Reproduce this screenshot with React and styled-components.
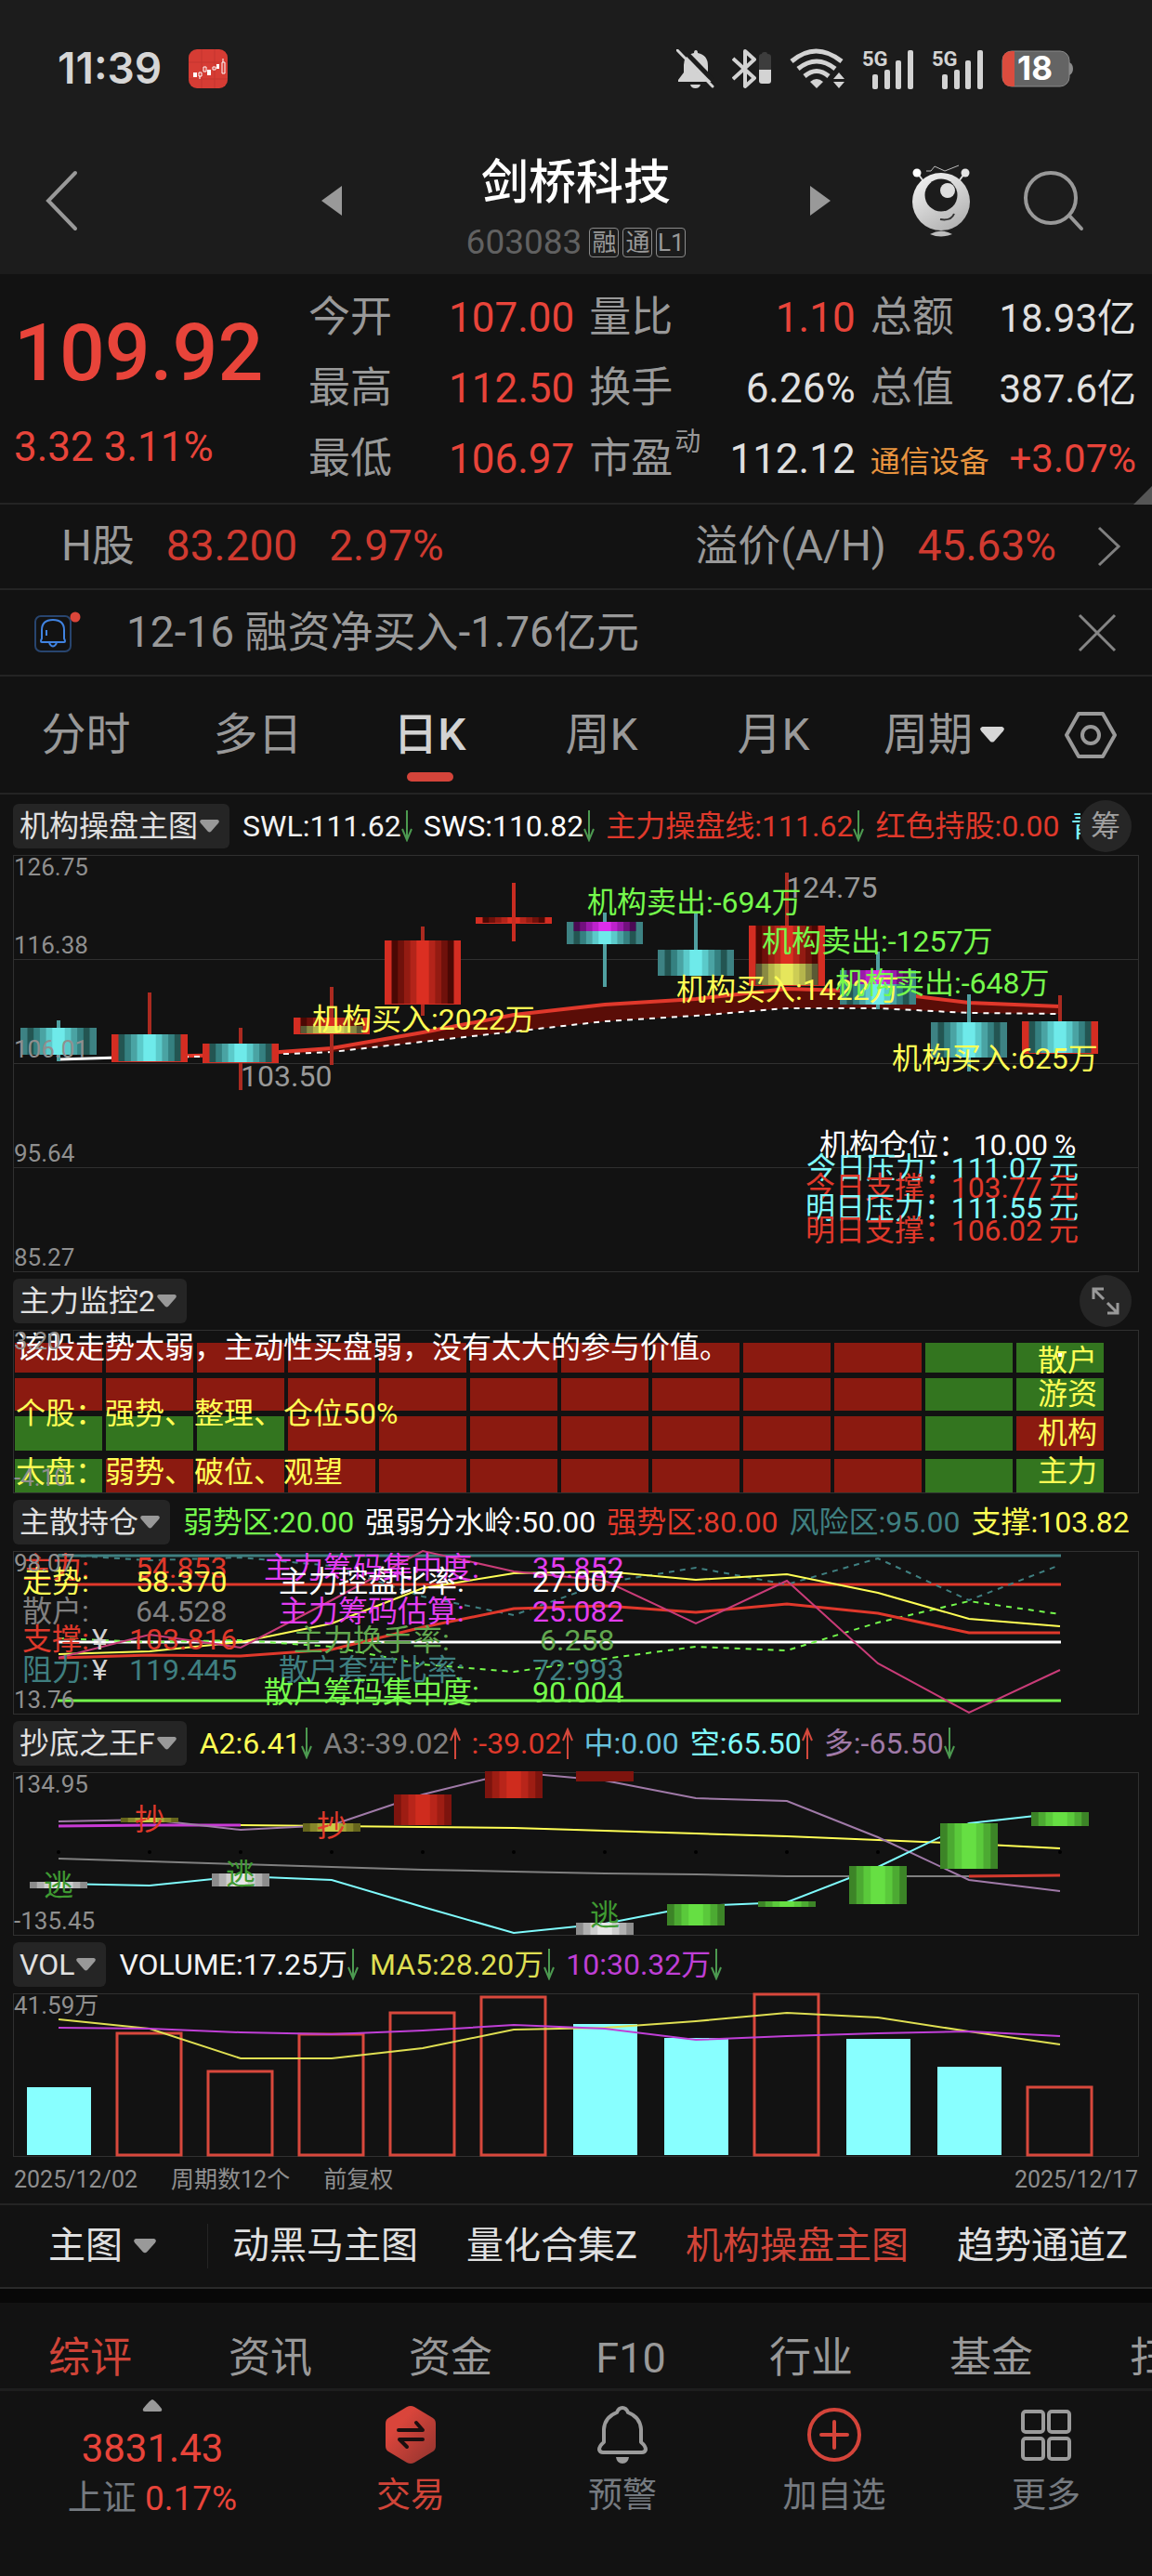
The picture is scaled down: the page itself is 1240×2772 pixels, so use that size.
import { Fragment } from 'react'
import styled, { createGlobalStyle } from 'styled-components'

const RED = '#e8443a'
const DARK_RED = '#d03a30'
const GREY = '#999999'
const CYAN = '#7ffbfd'
const YELLOW = '#ffff55'
const GREEN = '#75fb4c'
const TEAL = '#3f7f80'
const MAGENTA = '#e33df0'

const GlobalStyle = createGlobalStyle`
    * {
        box-sizing: border-box;
    }

    body {
        margin: 0;
        background-color: #121212;
        color: #e0e0e0;
        font-family: Roboto, 'Noto Sans CJK SC', sans-serif;
        line-height: 1.2;
    }

    button {
        padding: 0;
        border: none;
        background: none;
        color: inherit;
        font: inherit;
        cursor: pointer;
    }

    svg {
        display: block;
        flex-shrink: 0;
    }
`

const Page = styled.div`
    min-height: 100vh;
    overflow: hidden;
`

const Header = styled.header`
    height: 295px;
    background-color: #1c1c1c;
`

const StatusBar = styled.div`
    display: flex;
    align-items: center;
    justify-content: space-between;
    height: 148px;
    padding: 0 85px 0 62px;
`

const StatusGroup = styled.div`
    display: flex;
    align-items: center;
    gap: ${props => props.gap}px;
`

const Clock = styled.span`
    font-family: Inter, sans-serif;
    font-size: 46px;
    font-weight: 600;
    color: #d6d6d6;
`

const TitleBar = styled.div`
    display: grid;
    grid-template-columns: 1fr 548px 1fr;
    align-items: center;
    height: 136px;
`

const BackButton = styled.button`
    justify-self: start;
    padding-left: 48px;
`

const TitleMiddle = styled.div`
    display: flex;
    align-items: center;
    justify-content: space-between;
`

const TitleText = styled.div`
    display: flex;
    flex-direction: column;
    align-items: center;
    gap: 12px;
    padding-top: 14px;
`

const StockName = styled.h1`
    margin: 0;
    font-size: 51px;
    font-weight: 500;
    line-height: 64px;
    color: #ffffff;
`

const StockCode = styled.div`
    display: flex;
    align-items: center;
    gap: 4px;
    font-size: 37px;
    line-height: 40px;
    color: #616161;
`

const Code = styled.span`
    margin-right: 4px;
`

const Badge = styled.span`
    width: 32px;
    height: 32px;
    border: 1px solid #8a8a8a;
    border-radius: 4px;
    font-size: 26px;
    line-height: 30px;
    text-align: center;
    color: ${GREY};
`

const TitleActions = styled.div`
    display: flex;
    align-items: center;
    justify-content: flex-end;
    gap: 56px;
    padding-right: 73px;
`

const Quote = styled.section`
    display: grid;
    grid-template-columns: 332px 1fr;
    position: relative;
    height: 248px;
    padding-top: 9px;
    border-bottom: 2px solid #242424;
`

const PriceBox = styled.div`
    display: flex;
    flex-direction: column;
    padding: 24px 0 0 15px;
    color: ${RED};
`

const Price = styled.strong`
    font-size: 86px;
    font-weight: 500;
    line-height: 104px;
`

const Change = styled.span`
    margin-top: 23px;
    font-size: 44px;
    line-height: 52px;
`

const StatGrid = styled.dl`
    display: grid;
    grid-template-columns: repeat(3, 1fr);
    grid-auto-rows: 76px;
    column-gap: 16px;
    margin: 0;
    padding-right: 17px;
`

const Stat = styled.div`
    display: flex;
    align-items: baseline;
    justify-content: space-between;
    line-height: 76px;
`

const StatLabel = styled.dt`
    display: flex;
    font-size: ${props => (props.small ? 32 : 45)}px;
    color: ${props => (props.small ? '#e8943f' : GREY)};
    white-space: nowrap;

    sup {
        margin: 8px 0 0 2px;
        font-size: 28px;
        line-height: 24px;
    }
`

const StatValue = styled.dd`
    margin: 0;
    font-size: ${props => (props.compact ? 42 : 44)}px;
    color: ${props => (props.up ? RED : '#e0e0e0')};
    white-space: nowrap;
`

const Corner = styled.span`
    position: absolute;
    right: 0;
    bottom: -2px;
    border-left: 20px solid transparent;
    border-bottom: 20px solid #555555;
`

const LineRow = styled.div`
    display: flex;
    align-items: center;
    height: ${props => props.height}px;
    padding: 0 ${props => props.right}px 0 ${props => props.left}px;
    border-bottom: 2px solid #242424;
    color: ${GREY};
`

const RowText = styled.span`
    margin-right: ${props => props.gap || 0}px;
    margin-left: ${props => props.before || 0}px;
    font-size: 46px;
    color: ${props => (props.up ? DARK_RED : GREY)};
    white-space: nowrap;
`

const Spacer = styled.span`
    flex: 1;
`

const PeriodTabs = styled.nav`
    display: grid;
    grid-template-columns: repeat(5, 185fr) 315fr;
    height: 127px;
    border-bottom: 2px solid #242424;
`

const PeriodTab = styled.button`
    position: relative;
    font-size: 48px;
    font-weight: ${props => (props.active ? 500 : 400)};
    color: ${props => (props.active ? '#d2d2d2' : GREY)};

    &::after {
        content: '';
        display: ${props => (props.active ? 'block' : 'none')};
        position: absolute;
        left: 50%;
        bottom: 12px;
        width: 50px;
        height: 10px;
        margin-left: -25px;
        border-radius: 5px;
        background-color: #d4443a;
    }
`

const PeriodEnd = styled.div`
    display: flex;
    align-items: center;
    justify-content: space-between;
    padding: 0 38px 0 26px;
`

const PeriodMore = styled.button`
    display: flex;
    align-items: center;
    gap: 8px;
    font-size: 48px;
    color: ${GREY};
`

const Charts = styled.main`
    padding-top: 3px;
`

const PanelHead = styled.div`
    display: flex;
    align-items: center;
    position: relative;
    height: 62px;
    padding: 0 14px;
    font-size: 32px;
    line-height: 48px;
    white-space: nowrap;
`

const Pill = styled.button`
    display: flex;
    align-items: center;
    flex-shrink: 0;
    gap: 2px;
    height: 48px;
    margin-right: 14px;
    padding: 0 11px 0 7px;
    border-radius: 6px;
    background-color: #252525;
    color: #e0e0e0;
`

const Readouts = styled.div`
    display: flex;
    flex: 1;
    gap: 12px;
    min-width: 0;
    margin-right: ${props => (props.clipped ? 63 : 0)}px;
    overflow: hidden;
`

const Readout = styled.span`
    display: flex;
    align-items: center;
    flex-shrink: 0;
    color: ${props => props.color};
`

const RoundButton = styled.button`
    display: flex;
    align-items: center;
    justify-content: center;
    position: absolute;
    top: 3px;
    right: 22px;
    width: 56px;
    height: 56px;
    border-radius: 50%;
    background-color: #262626;
    color: #a0a0a0;
`

const Chart = styled.svg`
    width: 100%;
    height: auto;
    overflow: visible;
    font-size: 32px;
`

const AxisText = styled.text`
    font-size: 26px;
    fill: #8f8f8f;
`

const DateRow = styled.div`
    display: flex;
    align-items: center;
    gap: 36px;
    height: 52px;
    padding: 0 15px;
    border-bottom: 2px solid #242424;
    font-size: 25px;
    color: #8f8f8f;
`

const IndicatorBar = styled.div`
    display: flex;
    align-items: center;
    gap: 52px;
    height: 90px;
    padding-left: 52px;
    border-bottom: 2px solid #2a2a2a;
    font-size: 40px;
    white-space: nowrap;
    overflow: hidden;
`

const MainPicker = styled.button`
    display: flex;
    align-items: center;
    flex-shrink: 0;
    gap: 12px;
    width: 172px;
    height: 48px;
    margin-right: -26px;
    border-right: 1px solid #242424;
    color: #e0e0e0;
`

const Indicator = styled.button`
    flex-shrink: 0;
    color: ${props => (props.active ? '#d04438' : '#e0e0e0')};
`

const Band = styled.div`
    height: 15px;
    background-color: #080808;
`

const InfoTabs = styled.nav`
    display: flex;
    height: 95px;
    padding-top: 28px;
    border-bottom: 3px solid #1e1e1e;
    overflow: hidden;
`

const InfoTab = styled.button`
    flex: 0 0 194px;
    font-size: 45px;
    line-height: 64px;
    color: ${props => (props.active ? '#d04438' : GREY)};
`

const BottomBar = styled.footer`
    display: grid;
    grid-template-columns: 328fr repeat(4, 228fr);
    height: 199px;
`

const IndexBox = styled.button`
    display: flex;
    flex-direction: column;
    align-items: center;
    align-self: start;
    padding-top: 9px;
    color: ${RED};
`

const IndexValue = styled.span`
    margin-top: 14px;
    font-size: 42px;
    line-height: 52px;
`

const IndexChange = styled.span`
    font-size: 37px;
    line-height: 56px;

    span {
        color: #757a80;
    }
`

const NavButton = styled.button`
    display: flex;
    flex-direction: column;
    align-items: center;
    align-self: start;
    gap: 8px;
    padding-top: 16px;
    font-size: 37px;
    line-height: 54px;
    color: ${props => (props.active ? '#d04438' : '#757a80')};
`

const stats = [
    { label: '今开', value: '107.00', up: true },
    { label: '量比', value: '1.10', up: true },
    { label: '总额', value: '18.93亿', compact: true },
    { label: '最高', value: '112.50', up: true },
    { label: '换手', value: '6.26%' },
    { label: '总值', value: '387.6亿', compact: true },
    { label: '最低', value: '106.97', up: true },
    { label: '市盈', sup: '动', value: '112.12' },
    { label: '通信设备', small: true, value: '+3.07%', up: true, compact: true },
]

const readouts = {
    main: [
        { text: 'SWL:111.62', color: '#f2f2f2', dir: 'down' },
        { text: 'SWS:110.82', color: '#ffffff', dir: 'down' },
        { text: '主力操盘线:111.62', color: '#e0392b', dir: 'down' },
        { text: '红色持股:0.00', color: '#e0392b' },
        { text: '青', color: CYAN },
    ],
    holding: [
        { text: '弱势区:20.00', color: GREEN },
        { text: '强弱分水岭:50.00', color: '#ffffff' },
        { text: '强势区:80.00', color: '#e0392b' },
        { text: '风险区:95.00', color: TEAL },
        { text: '支撑:103.82', color: YELLOW },
    ],
    bottom: [
        { text: 'A2:6.41', color: YELLOW, dir: 'down' },
        { text: 'A3:-39.02', color: '#808080', dir: 'up' },
        { text: ':-39.02', color: '#e0392b', dir: 'up' },
        { text: '中:0.00', color: '#67c0dc' },
        { text: '空:65.50', color: CYAN, dir: 'up' },
        { text: '多:-65.50', color: '#a07aa8', dir: 'down' },
    ],
    volume: [
        { text: 'VOLUME:17.25万', color: '#f2f2f2', dir: 'down' },
        { text: 'MA5:28.20万', color: '#dfdf52', dir: 'down' },
        { text: '10:30.32万', color: '#bf3fd6', dir: 'down' },
    ],
}

const palettes = {
    red: ['#4a0804', '#6f110b', '#931b12', '#b3241a', '#dc2f22'],
    cyan: ['#235552', '#358080', '#4aa3a3', '#5bcaca', '#6eeaea'],
    olive: ['#5a5a35', '#8a8a42', '#b5b54c', '#cdcd55', '#e6e65c'],
    purple: ['#4b0a54', '#72107e', '#9a1aaa', '#bd22cc', '#dc2eea'],
    barRed: ['#7d140e', '#9e1d13', '#b8251a', '#cf2c1e'],
    barGreen: ['#3c8427', '#4caa32', '#5ac93b', '#66df43'],
    barWhite: ['#8c8c8c', '#b0b0b0', '#cecece', '#e6e6e6'],
    barOlive: ['#65651c', '#86862a', '#a5a535', '#caca45'],
    barDark: ['#7d140e'],
}

const candles = [
    { top: 186, bottom: 215, high: 178, low: 222, body: 'cyan', edge: '#3d8283' },
    { top: 193, bottom: 223, high: 148, low: 223, body: 'cyan', edge: '#d42d22' },
    { top: 203, bottom: 224, high: 186, low: 253, body: 'cyan', edge: '#d42d22' },
    { top: 175, bottom: 193, high: 142, low: 226, body: 'red', edge: '#d42d22', part: ['olive', 184, 192] },
    { top: 92, bottom: 161, high: 77, low: 173, body: 'red', edge: '#d42d22' },
    { top: 67, bottom: 74, high: 30, low: 93, body: 'red', edge: '#d42d22' },
    { top: 72, bottom: 96, high: 62, low: 142, body: 'cyan', edge: '#3d8283', part: ['purple', 72, 82] },
    { top: 102, bottom: 130, high: 62, low: 130, body: 'cyan', edge: '#3d8283' },
    { top: 76, bottom: 141, high: 19, low: 141, body: 'red', edge: '#d42d22', part: ['olive', 117, 140] },
    { top: 124, bottom: 161, high: 104, low: 166, body: 'cyan', edge: '#3d8283', part: ['purple', 124, 139] },
    { top: 180, bottom: 218, high: 150, low: 233, body: 'cyan', edge: '#3d8283' },
    { top: 179, bottom: 214, high: 151, low: 214, body: 'cyan', edge: '#d42d22' },
]

const trades = [
    { x: 336, y: 188, text: '机构买入:2022万', color: YELLOW },
    { x: 632, y: 62, text: '机构卖出:-694万', color: GREEN },
    { x: 820, y: 104, text: '机构卖出:-1257万', color: GREEN },
    { x: 728, y: 156, text: '机构买入:1422万', color: YELLOW },
    { x: 899, y: 149, text: '机构卖出:-648万', color: GREEN },
    { x: 960, y: 230, text: '机构买入:625万', color: YELLOW },
]

const levels = [
    { x: 882, y: 323, label: '机构仓位：', value: '10.00', unit: '%', color: '#ffffff' },
    { x: 868, y: 348, label: '今日压力：', value: '111.07', unit: '元', color: CYAN },
    { x: 867, y: 369, label: '今日支撑：', value: '103.77', unit: '元', color: '#e0392b' },
    { x: 867, y: 391, label: '明日压力：', value: '111.55', unit: '元', color: CYAN },
    { x: 867, y: 415, label: '明日支撑：', value: '106.02', unit: '元', color: '#e0392b' },
]

const swl = [220, 217, 215, 208, 191, 172, 161, 155, 144, 147, 159, 163]
const sws = [220, 218, 216, 212, 201, 190, 179, 173, 165, 165, 170, 171]

const heatRows = [
    { y: 14, height: 32, green: [10, 11], label: '散户', labelY: 44 },
    { y: 52, height: 35, green: [10, 11], label: '游资', labelY: 80 },
    { y: 93, height: 37, green: [0, 1, 2, 10], label: '机构', labelY: 122 },
    { y: 139, height: 36, green: [0, 10, 11], label: '主力', labelY: 163 },
]

const holdingTexts = [
    { x: 24, valueX: 146, y: 29, label: '主力:', value: '54.853', color: '#e0392b' },
    { x: 24, valueX: 146, y: 76, label: '散户:', value: '64.528', color: '#808080' },
    { x: 24, valueX: 139, y: 106, label: '支撑:', value: '103.816', color: '#e0392b', yen: true },
    { x: 24, valueX: 139, y: 139, label: '阻力:', value: '119.445', color: TEAL, yen: true },
    { x: 284, valueX: 573, y: 29, label: '主力筹码集中度:', value: '35.852', color: MAGENTA },
    { x: 24, valueX: 146, y: 44, label: '走势:', value: '58.370', color: YELLOW },
    { x: 300, valueX: 573, y: 44, label: '主力控盘比率:', value: '27.007', color: '#ffffff' },
    { x: 300, valueX: 573, y: 76, label: '主力筹码估算:', value: '25.082', color: MAGENTA },
    { x: 316, valueX: 581, y: 107, label: '主力换手率:', value: '6.258', color: '#62a84f' },
    { x: 300, valueX: 573, y: 139, label: '散户套牢比率:', value: '72.993', color: TEAL },
    { x: 284, valueX: 573, y: 163, label: '散户筹码集中度:', value: '90.004', color: GREEN },
]

const strengthBars = [
    [0, 118, 125, 'barWhite'],
    [1, 49, 54, 'barOlive'],
    [2, 109, 123, 'barWhite'],
    [3, 55, 64, 'barOlive'],
    [4, 24, 57, 'barRed'],
    [5, -1, 28, 'barRed'],
    [6, -1, 10, 'barDark'],
    [6, 162, 175, 'barWhite'],
    [7, 142, 165, 'barGreen'],
    [8, 139, 145, 'barGreen'],
    [9, 101, 142, 'barGreen'],
    [10, 55, 104, 'barGreen'],
    [11, 43, 58, 'barGreen'],
]

const marks = [
    [1, 62, '抄'],
    [3, 69, '抄'],
    [0, 133, '逃'],
    [2, 121, '逃'],
    [6, 165, '逃'],
]

const volumes = [
    [101, false], [42, true], [83, true], [43, true], [20, true], [3, true],
    [33, false], [48, false], [0, true], [49, false], [79, false], [100, true],
]

const cx = i => 63 + i * 98
const toPoints = (ys, start = 0) => ys.map((y, i) => `${cx(i + start)},${y}`).join(' ')

const Line = ({ ys, start, color, width = 2, dash }) => (
    <polyline points={toPoints(ys, start)} fill="none" stroke={color} strokeWidth={width} strokeDasharray={dash} />
)

const Frame = ({ height }) => (
    <rect x="14.5" y="0.5" width="1211" height={height - 1} fill="none" stroke="#303030" />
)

// Body painted as nested bands, darkest outside and brightest in the middle
const Bands = ({ x, width, top, bottom, palette }) => {
    const colors = palettes[palette]
    return colors.map((color, k) => {
        const inset = (width / 2 / colors.length) * k
        return <rect key={k} x={x - width / 2 + inset} y={top} width={width - inset * 2} height={bottom - top} fill={color} />
    })
}

const Candle = ({ index, top, bottom, high, low, body, edge, part }) => {
    const x = cx(index)
    const isRed = edge === '#d42d22'
    return (
        <g>
            <rect x={x - 2} y={high} width="4" height={low - high} fill={isRed ? '#ab2a20' : '#4f9fa0'} />
            <rect x={x - 41} y={top} width="82" height={bottom - top} fill={edge} />
            <Bands x={x} width={67} top={top} bottom={isRed ? bottom - 1 : bottom} palette={body} />
            {part && <Bands x={x} width={67} top={part[1]} bottom={part[2]} palette={part[0]} />}
            {index === 5 && <rect x={x - 2} y={high} width="4" height={low - high} fill="#c92c21" />}
        </g>
    )
}

const Caret = ({ width = 22, color = '#999999' }) => (
    <svg width={width} height={width * 0.64} viewBox="0 0 22 14">
        <path d="M2 0h18q3 1 1 4l-8 9q-2 2-4 0L1 4Q-1 1 2 0z" fill={color} />
    </svg>
)

const Trend = ({ dir }) => (
    <svg width="12" height="34" viewBox="0 0 12 34" fill="none" strokeWidth="2">
        {dir === 'down'
            ? <path d="M6 0v32M1 20l5 12 5-12" stroke="#4c9a50" />
            : <path d="M6 34V2M1 14L6 2l5 12" stroke="#d4483c" />}
    </svg>
)

const Signal = () => (
    <svg width="56" height="43" viewBox="0 0 56 43" fill="#d3d3d3">
        <text x="0" y="18" fontSize="22" fontWeight="700" fontFamily="Roboto, sans-serif">5G</text>
        <rect x="11" y="27" width="6" height="16" rx="2" />
        <rect x="24" y="22" width="6" height="21" rx="2" />
        <rect x="36" y="12" width="6" height="31" rx="2" />
        <rect x="49" y="1" width="6" height="42" rx="2" />
    </svg>
)

const StatusIcons = () => (
    <StatusGroup gap={19}>
        <svg width="41" height="42" viewBox="0 0 41 42">
            <path d="M21 1q2 0 2 3 11 2 11 14v8l4 7v2H2v-2l6-8v-8Q8 6 19 4q0-3 2-3z" fill="#d3d3d3" />
            <path d="M15 38h11q-1 4-5.500 4T15 38z" fill="#d3d3d3" />
            <path d="M4 -3L44 38" stroke="#1c1c1c" strokeWidth="5" />
            <path d="M1 1l38 39" stroke="#d3d3d3" strokeWidth="3" strokeLinecap="round" />
        </svg>
        <svg width="43" height="44" viewBox="0 0 43 44">
            <path d="M1 11l23 21-10 9V3l10 9L1 33" fill="none" stroke="#d3d3d3" strokeWidth="4" strokeLinejoin="round" />
            <path d="M29 24V9q0-3 3-3 0-2 3-2h1q2 0 2 2 4 0 4 3v15z" fill="#3d3d3d" />
            <path d="M29 23h13v12q0 3-3 3h-7q-3 0-3-3z" fill="#d3d3d3" />
        </svg>
        <svg width="59" height="44" viewBox="0 0 59 44">
            <g fill="none" stroke="#d3d3d3" strokeWidth="5">
                <path d="M2 14Q28-8 56 14" />
                <path d="M9 22q20-16 40 0" />
                <path d="M16 30q13-11 26 0" />
            </g>
            <path d="M22 36q7-6 14 0l-7 7z" fill="#d3d3d3" />
            <path d="M53 26l6 7H47zM47 36h12l-6 7z" fill="#d3d3d3" />
        </svg>
        <Signal />
        <Signal />
        <svg width="77" height="40" viewBox="0 0 77 40">
            <rect x="1" y="1" width="72" height="38" rx="10" fill="#646464" stroke="#8a8a8a" />
            <path d="M73 13q4 2 4 7t-4 7z" fill="#8a8a8a" />
            <path d="M14 1H11Q1 1 1 11v18q0 10 10 10h3z" fill="#db4c3e" />
            <text x="36" y="32" textAnchor="middle" fontSize="35" fontWeight="700" fontFamily="Inter, sans-serif" fill="#ffffff">18</text>
        </svg>
    </StatusGroup>
)

const AppIcon = () => (
    <svg width="42" height="42" viewBox="0 0 42 42">
        <rect width="42" height="42" rx="9" fill="#d63c34" />
        <path d="M0 14h42M0 32h42M14 0v42M28 0v42" stroke="#c4352e" />
        <path d="M5 25h4v5H5zM20 22h4v6h-4zM30 16h3v5h-3z" fill="#ffffff" />
        <path d="M11 25h3v4h-3zM16 19h3v5h-3zM26 19h3v3h-3zM36 14h3v12h-3zM12 29v3M37 10v4" fill="none" stroke="#ffffff" />
    </svg>
)

const Robot = () => (
    <svg width="63" height="78" viewBox="0 0 63 78">
        <defs>
            <linearGradient id="robot" x1="0" y1="0" x2="0.6" y2="1">
                <stop offset="0" stopColor="#f8f8f8" />
                <stop offset="1" stopColor="#b4b4b4" />
            </linearGradient>
        </defs>
        <path d="M6 10l6 8M56 10l-6 8" stroke="#dcdcdc" strokeWidth="2" />
        <circle cx="5" cy="9" r="4.500" fill="#ffffff" />
        <circle cx="57" cy="9" r="4.500" fill="#e4e4e4" />
        <path d="M15 7h5l4-5 11 5 15-6" fill="none" stroke="#bdbdbd" />
        <circle cx="31" cy="40" r="31" fill="url(#robot)" />
        <circle cx="31" cy="33" r="17.500" fill="#1c1c1c" />
        <circle cx="38" cy="28" r="8" fill="#dedede" />
        <path d="M30 59q12 2 15-6" fill="none" stroke="#333333" strokeWidth="2" />
        <path d="M19 75q12-7 24 0-12 5-24 0z" fill="#bdbdbd" />
    </svg>
)

const Indicators = ({ name, items = [], children }) => (
    <PanelHead>
        <Pill type="button" aria-haspopup="listbox">
            {name}
            <Caret width={21} />
        </Pill>
        <Readouts clipped={children ? 1 : 0}>
            {items.map(item => (
                <Readout key={item.text} color={item.color}>
                    {item.text}
                    {item.dir && <Trend dir={item.dir} />}
                </Readout>
            ))}
        </Readouts>
        {children}
    </PanelHead>
)

const MainChart = () => (
    <Chart viewBox="0 0 1240 449">
        <Frame height={449} />
        <path d="M14 112.500h1211M14 224.500h1211M14 336.500h1211" stroke="#303030" />
        <polygon points={`${toPoints(swl)} ${sws.map((y, i) => `${cx(i)},${y}`).reverse().join(' ')}`} fill="#5a0d07" />
        <Line ys={swl.slice(0, 2)} color="#ffffff" width={3} />
        <Line ys={swl.slice(1)} start={1} color="#e0382b" width={4} />
        <Line ys={sws.slice(1)} start={1} color="#ffffff" dash="6 6" />
        {candles.map((candle, i) => <Candle key={i} index={i} {...candle} />)}
        <AxisText x="15" y="22">126.75</AxisText>
        <AxisText x="15" y="106">116.38</AxisText>
        <AxisText x="15" y="218">106.01</AxisText>
        <AxisText x="15" y="330">95.64</AxisText>
        <AxisText x="15" y="442">85.27</AxisText>
        <text x="846" y="46" fill={GREY}>124.75</text>
        <text x="259" y="249" fill={GREY}>103.50</text>
        {trades.map(trade => (
            <text key={trade.text} x={trade.x} y={trade.y} fill={trade.color}>{trade.text}</text>
        ))}
        {levels.map(level => (
            <g key={level.label} fill={level.color}>
                <text x={level.x} y={level.y}>{level.label}</text>
                <text x={level.unit === '%' ? 1128 : 1122} y={level.y} textAnchor="end">{level.value}</text>
                <text x={level.unit === '%' ? 1135 : 1129} y={level.y}>{level.unit}</text>
            </g>
        ))}
    </Chart>
)

const HeatChart = () => (
    <Chart viewBox="0 0 1240 176">
        {heatRows.map(row => (
            <Fragment key={row.label}>
                {candles.map((_, i) => (
                    <rect key={i} x={16 + i * 98} y={row.y} width="94" height={row.height} fill={row.green.includes(i) ? '#33751f' : '#8b1a10'} />
                ))}
                <text x="1117" y={row.labelY} fill={YELLOW}>{row.label}</text>
            </Fragment>
        ))}
        <Frame height={176} />
        <rect x="1139" y="25" width="4" height="4" fill="#ffffff" />
        <text x="17" y="30" fill="#ffffff">该股走势太弱，主动性买盘弱，没有太大的参与价值。</text>
        <text x="17" y="101" fill={YELLOW}>个股：强势、整理、仓位50%</text>
        <text x="17" y="164" fill={YELLOW}>大盘：弱势、破位、观望</text>
        <AxisText x="15" y="21">3.20</AxisText>
        <AxisText x="15" y="168">-4.10</AxisText>
    </Chart>
)

const HoldingChart = () => (
    <Chart viewBox="0 0 1240 176">
        <Frame height={176} />
        <path d="M62 5h1080" stroke={TEAL} strokeWidth="3" />
        <path d="M62 36h1080" stroke="#e0382b" strokeWidth="3" />
        <path d="M62 98h1080" stroke="#ffffff" strokeWidth="3" />
        <path d="M62 161h1080" stroke={GREEN} strokeWidth="3" />
        <Line ys={[4, 10, 7, 16, 49, 69, 34, 18, 36, 8, 53, 15]} color={TEAL} dash="6 6" />
        <Line ys={[94, 98, 96, 103, 122, 130, 116, 103, 107, 77, 54, 68]} color={GREEN} dash="6 6" />
        <Line ys={[115, 112, 113, 106, 82, 62, 59, 66, 57, 67, 88, 88]} color="#e0382b" width={3} />
        <Line ys={[111, 108, 98, 78, 40, 24, 22, 31, 25, 45, 73, 81]} color={YELLOW} />
        <Line ys={[115, 90, 104, 53, 0, 22, 32, 78, 32, 121, 174, 128]} color="#c93c78" />
        {holdingTexts.map(item => (
            <g key={item.label} fill={item.color}>
                <text x={item.x} y={item.y}>{item.label}</text>
                {item.yen && <text x="99" y={item.y} fill="#d0d0d0">¥</text>}
                <text x={item.valueX} y={item.y}>{item.value}</text>
            </g>
        ))}
        <AxisText x="15" y="22">98.07</AxisText>
        <AxisText x="15" y="169">13.76</AxisText>
    </Chart>
)

const BottomChart = () => (
    <Chart viewBox="0 0 1240 176">
        <Frame height={176} />
        <Line ys={[93, 96, 99, 102, 105, 107, 109, 110, 112, 112, 112]} color="#808080" />
        <Line ys={[112, 111]} start={10} color="#d43a2e" width={3} />
        <Line ys={[58, 57, 57]} color="#c93ad6" width={3} />
        <Line ys={[57, 58, 59, 60, 63, 66, 69, 73, 77, 82]} start={2} color={YELLOW} />
        <Line ys={[53, 51, 62, 57, 24, 0, 9, 28, 31, 70, 116, 128]} color="#a07aa8" />
        <Line ys={[120, 122, 112, 116, 145, 173, 163, 144, 140, 102, 55, 44]} color={CYAN} />
        {candles.map((_, i) => <circle key={i} cx={cx(i)} cy="86" r="2" fill="#000000" />)}
        {strengthBars.map(([i, top, bottom, palette]) => (
            <Bands key={`${i}-${top}`} x={cx(i)} width={62} top={top} bottom={bottom} palette={palette} />
        ))}
        {marks.map(([i, y, text]) => (
            <text key={i} x={cx(i)} y={y} textAnchor="middle" fill={text === '抄' ? '#e0392b' : '#3f9a32'}>{text}</text>
        ))}
        <AxisText x="15" y="22">134.95</AxisText>
        <AxisText x="15" y="169">-135.45</AxisText>
    </Chart>
)

const VolumeChart = () => (
    <Chart viewBox="0 0 1240 176">
        <Frame height={176} />
        {volumes.map(([top, up], i) => (up
            ? <rect key={i} x={cx(i) - 35} y={top + 1} width="69" height={173 - top} fill="none" stroke="#d8483c" strokeWidth="3" />
            : <rect key={i} x={cx(i) - 34} y={top} width="69" height={174 - top} fill="#88ffff" />
        ))}
        <Line ys={[28, 38, 70, 70, 59, 39, 37, 30, 21, 26, 41, 55]} color="#dfdf52" />
        <Line ys={[37, 38, 42, 44, 40, 34, 38, 50, 46, 43, 41, 46]} color="#bf3fd6" />
        <AxisText x="15" y="22">41.59万</AxisText>
    </Chart>
)

const App = () => {
    return (
        <Page>
            <GlobalStyle />
            <Header>
                <StatusBar>
                    <StatusGroup gap={29}>
                        <Clock>11:39</Clock>
                        <AppIcon />
                    </StatusGroup>
                    <StatusIcons />
                </StatusBar>
                <TitleBar>
                    <BackButton type="button" aria-label="返回">
                        <svg width="36" height="66" viewBox="0 0 36 66" fill="none" stroke="#999999" strokeWidth="4" strokeLinecap="round">
                            <path d="M33 3L4 33l29 30" />
                        </svg>
                    </BackButton>
                    <TitleMiddle>
                        <button type="button" aria-label="上一个">
                            <svg width="22" height="32" viewBox="0 0 22 32"><path d="M22 0v32L0 16z" fill="#999999" /></svg>
                        </button>
                        <TitleText>
                            <StockName>剑桥科技</StockName>
                            <StockCode>
                                <Code>603083</Code>
                                <Badge>融</Badge>
                                <Badge>通</Badge>
                                <Badge>L1</Badge>
                            </StockCode>
                        </TitleText>
                        <button type="button" aria-label="下一个">
                            <svg width="22" height="32" viewBox="0 0 22 32"><path d="M0 0v32l22-16z" fill="#999999" /></svg>
                        </button>
                    </TitleMiddle>
                    <TitleActions>
                        <button type="button" aria-label="助手"><Robot /></button>
                        <button type="button" aria-label="搜索">
                            <svg width="66" height="66" viewBox="0 0 66 66" fill="none" stroke="#999999" strokeWidth="4" strokeLinecap="round">
                                <circle cx="30" cy="30" r="27" />
                                <path d="M50 49l13 14" />
                            </svg>
                        </button>
                    </TitleActions>
                </TitleBar>
            </Header>

            <Quote>
                <PriceBox>
                    <Price>109.92</Price>
                    <Change>3.32 3.11%</Change>
                </PriceBox>
                <StatGrid>
                    {stats.map(stat => (
                        <Stat key={stat.label}>
                            <StatLabel small={stat.small ? 1 : 0}>
                                {stat.label}
                                {stat.sup && <sup>{stat.sup}</sup>}
                            </StatLabel>
                            <StatValue up={stat.up ? 1 : 0} compact={stat.compact ? 1 : 0}>{stat.value}</StatValue>
                        </Stat>
                    ))}
                </StatGrid>
                <Corner />
            </Quote>

            <LineRow height={92} left={66} right={33}>
                <RowText gap={34}>H股</RowText>
                <RowText gap={34} up={1}>83.200</RowText>
                <RowText up={1}>2.97%</RowText>
                <Spacer />
                <RowText gap={34}>溢价(A/H)</RowText>
                <RowText gap={44} up={1}>45.63%</RowText>
                <svg width="26" height="44" viewBox="0 0 26 44" fill="none" stroke="#808080" strokeWidth="3">
                    <path d="M2 2l21 20L2 42" />
                </svg>
            </LineRow>

            <LineRow height={93} left={36} right={38}>
                <svg width="52" height="46" viewBox="0 0 52 46" fill="none">
                    <rect x="2" y="5" width="38" height="38" rx="6" stroke="#28456f" strokeWidth="2" />
                    <path d="M9 33q-2 0 0-4V20q0-11 12-11t12 11v9q2 4 0 4zM17 34q4 7 8 0M14 26v-6" stroke="#4083e0" strokeWidth="2" />
                    <circle cx="45" cy="6" r="5.500" fill="#dc463a" />
                </svg>
                <RowText before={48}>12-16 融资净买入-1.76亿元</RowText>
                <Spacer />
                <button type="button" aria-label="关闭">
                    <svg width="42" height="42" viewBox="0 0 42 42" stroke="#858585" strokeWidth="3">
                        <path d="M2 2l38 38M40 2L2 40" />
                    </svg>
                </button>
            </LineRow>

            <PeriodTabs>
                {['分时', '多日', '日K', '周K', '月K'].map(tab => (
                    <PeriodTab key={tab} type="button" active={tab === '日K' ? 1 : 0}>{tab}</PeriodTab>
                ))}
                <PeriodEnd>
                    <PeriodMore type="button" aria-haspopup="listbox">
                        周期
                        <Caret width={26} color="#d6d6d6" />
                    </PeriodMore>
                    <button type="button" aria-label="设置">
                        <svg width="56" height="50" viewBox="0 0 56 50" fill="none" stroke="#999999" strokeWidth="4" strokeLinejoin="round">
                            <path d="M15 2h26l13 23-13 23H15L2 25z" />
                            <circle cx="28" cy="25" r="9" />
                        </svg>
                    </button>
                </PeriodEnd>
            </PeriodTabs>

            <Charts>
                <Indicators name="机构操盘主图" items={readouts.main}>
                    <RoundButton type="button">筹</RoundButton>
                </Indicators>
                <MainChart />
                <Indicators name="主力监控2">
                    <RoundButton type="button" aria-label="全屏">
                        <svg width="30" height="30" viewBox="0 0 30 30" fill="none" stroke="#999999" strokeWidth="3">
                            <path d="M2 13V2h11M2 2l11 11M28 17v11H17M28 28L17 17" />
                        </svg>
                    </RoundButton>
                </Indicators>
                <HeatChart />
                <Indicators name="主散持仓" items={readouts.holding} />
                <HoldingChart />
                <Indicators name="抄底之王F" items={readouts.bottom} />
                <BottomChart />
                <Indicators name="VOL" items={readouts.volume} />
                <VolumeChart />
            </Charts>

            <DateRow>
                <span>2025/12/02</span>
                <span>周期数12个</span>
                <span>前复权</span>
                <Spacer />
                <span>2025/12/17</span>
            </DateRow>

            <IndicatorBar>
                <MainPicker type="button" aria-haspopup="listbox">
                    主图
                    <Caret width={24} />
                </MainPicker>
                {['动黑马主图', '量化合集Z', '机构操盘主图', '趋势通道Z'].map(item => (
                    <Indicator key={item} type="button" active={item === '机构操盘主图' ? 1 : 0}>{item}</Indicator>
                ))}
            </IndicatorBar>
            <Band />

            <InfoTabs>
                {['综评', '资讯', '资金', 'F10', '行业', '基金', '扫雷'].map(tab => (
                    <InfoTab key={tab} type="button" active={tab === '综评' ? 1 : 0}>{tab}</InfoTab>
                ))}
            </InfoTabs>

            <BottomBar>
                <IndexBox type="button">
                    <svg width="22" height="13" viewBox="0 0 22 13"><path d="M11 0q2 0 10 10 1 3-2 3H3q-3 0-2-3Q9 0 11 0z" fill="#999999" /></svg>
                    <IndexValue>3831.43</IndexValue>
                    <IndexChange><span>上证</span> 0.17%</IndexChange>
                </IndexBox>
                <NavButton type="button" active={1}>
                    <svg width="56" height="62" viewBox="0 0 56 62">
                        <defs>
                            <linearGradient id="trade" x1="0" y1="0" x2="1" y2="1">
                                <stop offset="0.3" stopColor="#d9453b" />
                                <stop offset="1" stopColor="#8f332e" />
                            </linearGradient>
                        </defs>
                        <path d="M24 1q4-2 8 0l20 12q3 2 3 6v24q0 4-3 6L32 61q-4 2-8 0L4 49q-3-2-3-6V19q0-4 3-6z" fill="url(#trade)" />
                        <path d="M15 26h26l-7-8M41 36H16l8 8" fill="none" stroke="#1a0f0f" strokeWidth="4" strokeLinecap="round" strokeLinejoin="round" />
                    </svg>
                    交易
                </NavButton>
                <NavButton type="button">
                    <svg width="54" height="62" viewBox="0 0 54 62">
                        <path d="M27 2q4 0 6 5 13 5 14 18v14q5 4 5 8-1 3-4 3H6q-3 0-4-3 0-4 5-8V25Q8 12 21 7q2-5 6-5z" fill="none" stroke="#9b9b9b" strokeWidth="4" strokeLinejoin="round" />
                        <path d="M20 55h14q-1 7-7 7t-7-7z" fill="#9b9b9b" />
                    </svg>
                    预警
                </NavButton>
                <NavButton type="button">
                    <svg width="62" height="62" viewBox="0 0 62 62" fill="none" stroke="#d4443a" strokeWidth="4" strokeLinecap="round">
                        <circle cx="31" cy="31" r="27" />
                        <path d="M17 31h28M31 17v28" />
                    </svg>
                    加自选
                </NavButton>
                <NavButton type="button">
                    <svg width="58" height="62" viewBox="0 0 58 62" fill="none" stroke="#9b9b9b" strokeWidth="4">
                        <rect x="4" y="6" width="22" height="22" rx="3" />
                        <rect x="32" y="6" width="22" height="22" rx="3" />
                        <rect x="4" y="35" width="22" height="22" rx="3" />
                        <rect x="32" y="35" width="22" height="22" rx="3" />
                    </svg>
                    更多
                </NavButton>
            </BottomBar>
        </Page>
    )
}

export default App
